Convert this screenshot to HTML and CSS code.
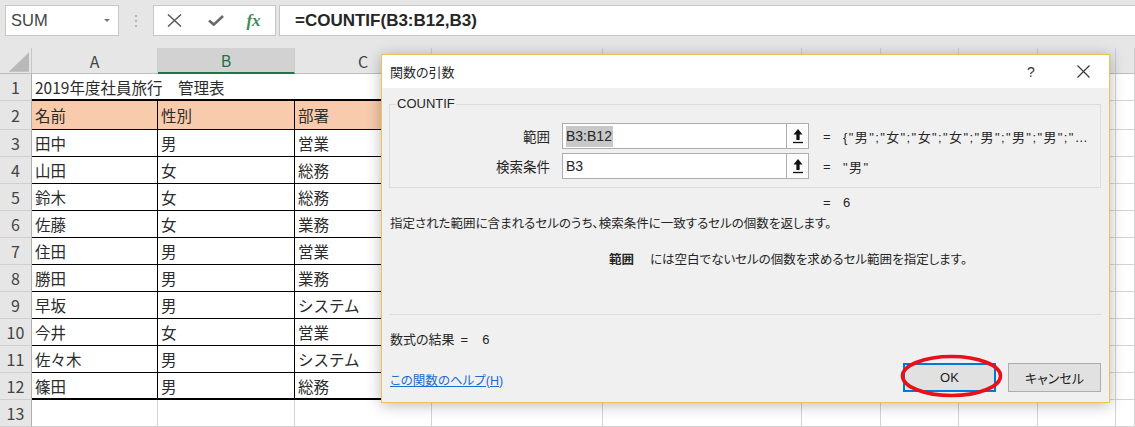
FILE: index.html
```html
<!DOCTYPE html>
<html lang="ja">
  <head>
    <meta charset="UTF-8" />
    <title>関数の引数</title>
    <link rel="stylesheet" href="styles.css">
  </head>
  <body>
    <div class="toolbar">
      <div class="name-box"><span>SUM</span><span class="caret"></span></div>
      <div class="grip"><span></span><span></span><span></span></div>
      <div class="fx-box">
        <span class="fx-icon">
          <svg width="15" height="13" viewBox="0 0 15 13"><path d="M1 0.5L14 12.5M14 0.5L1 12.5" stroke="#5a5a5a" stroke-width="1.5" fill="none"/></svg>
        </span>
        <span class="fx-icon">
          <svg width="16" height="11" viewBox="0 0 16 11"><path d="M1 5.5L5.8 9.6L15 1" stroke="#6a6a6a" stroke-width="2.6" fill="none"/></svg>
        </span>
        <span class="fx-icon fx">fx</span>
      </div>
      <div class="formula">=COUNTIF(B3:B12,B3)</div>
    </div>

    <div class="sheet">
      <div class="corner"><svg width="32" height="26" viewBox="0 0 32 26"><polygon points="30,4 30,24 9,24" fill="#b9b9b9"/></svg></div>
      <div class="ch">A</div><div class="ch sel">B</div><div class="ch">C</div><div class="ch">D</div><div class="ch">E</div><div class="ch">F</div><div class="ch">G</div><div class="ch">H</div><div class="ch">I</div><div class="ch"></div>

      <div class="rh">1</div><div class="title">2019年度社員旅行　管理表</div><div></div><div></div><div></div><div></div><div></div><div></div><div></div>
      <div class="rh">2</div><div class="t hd">名前</div><div class="t hd">性別</div><div class="t hd">部署</div><div></div><div></div><div></div><div></div><div></div><div></div><div></div>
      <div class="rh">3</div><div class="t">田中</div><div class="t">男</div><div class="t">営業</div><div></div><div></div><div></div><div></div><div></div><div></div><div></div>
      <div class="rh">4</div><div class="t">山田</div><div class="t">女</div><div class="t">総務</div><div></div><div></div><div></div><div></div><div></div><div></div><div></div>
      <div class="rh">5</div><div class="t">鈴木</div><div class="t">女</div><div class="t">総務</div><div></div><div></div><div></div><div></div><div></div><div></div><div></div>
      <div class="rh">6</div><div class="t">佐藤</div><div class="t">女</div><div class="t">業務</div><div></div><div></div><div></div><div></div><div></div><div></div><div></div>
      <div class="rh">7</div><div class="t">住田</div><div class="t">男</div><div class="t">営業</div><div></div><div></div><div></div><div></div><div></div><div></div><div></div>
      <div class="rh">8</div><div class="t">勝田</div><div class="t">男</div><div class="t">業務</div><div></div><div></div><div></div><div></div><div></div><div></div><div></div>
      <div class="rh">9</div><div class="t">早坂</div><div class="t">男</div><div class="t">システム</div><div></div><div></div><div></div><div></div><div></div><div></div><div></div>
      <div class="rh">10</div><div class="t">今井</div><div class="t">女</div><div class="t">営業</div><div></div><div></div><div></div><div></div><div></div><div></div><div></div>
      <div class="rh">11</div><div class="t">佐々木</div><div class="t">男</div><div class="t">システム</div><div></div><div></div><div></div><div></div><div></div><div></div><div></div>
      <div class="rh">12</div><div class="t end">篠田</div><div class="t end">男</div><div class="t end">総務</div><div></div><div></div><div></div><div></div><div></div><div></div><div></div>
      <div class="rh">13</div><div></div><div></div><div></div><div></div><div></div><div></div><div></div><div></div><div></div><div></div>
    </div>

    <!-- Function Arguments dialog floating over the sheet -->
    <div class="dialog">
      <div class="dlg-title">
        <span class="dlg-name">関数の引数</span>
        <span class="dlg-help">?</span>
        <span class="dlg-close">
          <svg width="13" height="13" viewBox="0 0 13 13"><path d="M0.5 0.5L12.5 12.5M12.5 0.5L0.5 12.5" stroke="#333" stroke-width="1.1" fill="none"/></svg>
        </span>
      </div>

      <div class="dlg-body">
        <div class="group">
          <span class="legend">COUNTIF</span>
          <div class="arg">
            <span class="arg-name">範囲</span>
            <span class="arg-input"><span class="picked">B3:B12</span></span>
            <span class="ref-btn">
              <svg width="12" height="16" viewBox="0 0 12 16"><path d="M6 1L10.5 6.5H7.6V12H4.4V6.5H1.5Z" fill="#111"/><path d="M1 14.5H11" stroke="#111" stroke-width="1.3"/></svg>
            </span>
            <span class="eq">=</span>
            <span class="arg-val">{"男";"女";"女";"女";"男";"男";"男";"…</span>
          </div>
          <div class="arg">
            <span class="arg-name">検索条件</span>
            <span class="arg-input">B3</span>
            <span class="ref-btn">
              <svg width="12" height="16" viewBox="0 0 12 16"><path d="M6 1L10.5 6.5H7.6V12H4.4V6.5H1.5Z" fill="#111"/><path d="M1 14.5H11" stroke="#111" stroke-width="1.3"/></svg>
            </span>
            <span class="eq">=</span>
            <span class="arg-val">"男"</span>
          </div>
        </div>

        <div class="result"><span class="eq">=</span><span class="res-val">6</span></div>
        <p class="desc">指定された範囲に含まれるセルのうち、検索条件に一致するセルの個数を返します。</p>
        <p class="desc arg-help"><b>範囲</b>には空白でないセルの個数を求めるセル範囲を指定します。</p>

        <div class="sep"></div>

        <div class="outcome">数式の結果<span class="out-eq">=</span><span class="out-val">6</span></div>

        <div class="dlg-foot">
          <a class="help-link" href="#">この関数のヘルプ(H)</a>
          <button class="btn btn-ok">OK</button>
          <button class="btn">キャンセル</button>
        </div>
      </div>
    </div>

    <svg class="mark" width="108" height="50" viewBox="0 0 108 50"><ellipse cx="53.5" cy="24" rx="49" ry="19.5" fill="none" stroke="#e8101a" stroke-width="3.6"/></svg>
  </body>
</html>
```

FILE: styles.css
```css
body {
  margin: 0;
  width: 1135px;
  height: 427px;
  overflow: hidden;
  position: relative;
  background: #fff;
  font-family: "Noto Sans CJK JP", sans-serif;
}

/* formula bar */
.toolbar {
  height: 48px;
  box-sizing: border-box;
  padding: 5px 0 0 5px;
  background: #e6e6e6;
  display: flex;
  align-items: flex-start;
}

.name-box {
  width: 114px;
  height: 31px;
  box-sizing: border-box;
  background: #fff;
  border: 1px solid #c6c6c6;
  display: flex;
  align-items: center;
  justify-content: space-between;
  padding: 0 8px 0 5px;
  font: 16.5px "Liberation Sans", sans-serif;
  color: #444;
}

.caret {
  border-left: 3px solid transparent;
  border-right: 3px solid transparent;
  border-top: 3px solid #777;
}

.grip {
  width: 34px;
  display: flex;
  flex-direction: column;
  align-items: center;
  gap: 3px;
  padding-top: 10px;
}

.grip span {
  width: 2px;
  height: 2px;
  background: #b4b4b4;
}

.fx-box {
  width: 123px;
  height: 31px;
  box-sizing: border-box;
  background: #fff;
  border: 1px solid #c6c6c6;
  display: grid;
  grid-template-columns: 41px 41px 39px;
  align-items: center;
}

.fx-icon {
  display: flex;
  justify-content: center;
  align-items: center;
}

.fx {
  font: italic bold 17px "Liberation Serif", serif;
  color: #3c8c58;
  padding-right: 4px;
}

.formula {
  flex: 1;
  height: 31px;
  box-sizing: border-box;
  margin-left: 3px;
  padding-left: 15px;
  background: #fff;
  border: 1px solid #c6c6c6;
  border-right: none;
  font: bold 17px "Liberation Sans", sans-serif;
  line-height: 29px;
  color: #262626;
}

/* worksheet grid */
.sheet {
  display: grid;
  grid-template-columns: 32px 126px 137px 137px 171px 199px 79px 78px 79px 78px 1fr;
  grid-template-rows: 26px 27px 29px repeat(11, 27px);
  font-size: 15.5px;
  color: #2b2b2b;
}

.sheet > div {
  box-sizing: border-box;
  border-right: 1px solid #d4d4d4;
  border-bottom: 1px solid #d4d4d4;
  padding-left: 3px;
  white-space: nowrap;
  display: flex;
  align-items: center;
}

.sheet > .corner {
  padding: 0;
  background: #e6e6e6;
  border-right: 1px solid #c6c6c6;
  border-bottom: 1px solid #bdbdbd;
}

.sheet > .ch {
  padding: 0;
  justify-content: center;
  background: #e6e6e6;
  color: #444;
  border-right: 1px solid #cdcdcd;
  border-bottom: 1px solid #bdbdbd;
  font-size: 16px;
}

.sheet > .ch.sel {
  background: #d2d2d2;
  color: #217346;
  border-bottom: 2px solid #217346;
}

.sheet > .rh {
  padding: 0;
  justify-content: center;
  background: #e6e6e6;
  color: #444;
  border-right: 1px solid #b0b0b0;
  border-bottom: 1px solid #cfcfcf;
  font-size: 16px;
}

.sheet > .title {
  grid-column: span 3;
  border-bottom: 2px solid #000;
}

.sheet > .t {
  border-right-color: #000;
  border-bottom-color: #000;
}

.sheet > .hd {
  background: #f8cbad;
}

.sheet > .end {
  border-bottom: 2px solid #000;
}

/* dialog */
.dialog {
  position: absolute;
  left: 381px;
  top: 54px;
  width: 729px;
  box-sizing: border-box;
  border: 1px solid #eec255;
  background: #f0f0f0;
  box-shadow: 0 2px 14px rgba(0, 0, 0, 0.28);
  font-family: "Liberation Sans", "Noto Sans CJK JP", sans-serif;
  font-size: 12.5px;
  font-feature-settings: "palt";
  color: #262626;
}

.dlg-title {
  height: 33px;
  background: #fff;
  display: flex;
  align-items: center;
  padding-left: 8px;
  font-size: 13px;
}

.dlg-name {
  flex: 1;
}

.dlg-help {
  width: 40px;
  text-align: center;
  font-size: 14px;
  color: #333;
  margin-right: 6px;
}

.dlg-close {
  width: 52px;
  display: flex;
  justify-content: center;
}

.dlg-body {
  padding: 0 8px 10px 7px;
}

.group {
  position: relative;
  margin-top: 16px;
  height: 84px;
  box-sizing: border-box;
  border: 1px solid #dcdcdc;
  padding-top: 18px;
}

.legend {
  position: absolute;
  top: -10px;
  left: 6px;
  padding: 0 1px;
  background: #f0f0f0;
  font-size: 13px;
  line-height: 18px;
}

.arg {
  display: flex;
  align-items: center;
  height: 26px;
}

.arg + .arg {
  margin-top: 4px;
}

.arg-name {
  width: 160px;
  text-align: right;
  font-size: 13.5px;
  font-feature-settings: normal;
}

.arg-input {
  margin-left: 12px;
  width: 224px;
  height: 26px;
  box-sizing: border-box;
  background: #fff;
  border: 1px solid #adadad;
  border-right: none;
  padding-left: 3px;
  font-size: 14px;
  line-height: 24px;
}

.picked {
  background: #c8c8c8;
  padding: 2px 1px 3px 0;
}

.ref-btn {
  width: 23px;
  height: 26px;
  box-sizing: border-box;
  border: 1px solid #adadad;
  background: #fbfbfb;
  box-shadow: inset 0 0 0 1px #fff;
  display: flex;
  justify-content: center;
  align-items: center;
}

.eq {
  margin-left: 14px;
  width: 20px;
  font-size: 13px;
}

.arg-val {
  font-size: 13px;
  letter-spacing: 1.4px;
}

.result {
  margin-top: 5px;
  padding-left: 434px;
  line-height: 20px;
  font-size: 13px;
}

.result .eq {
  margin-left: 0;
  display: inline-block;
}

.desc {
  margin: 0;
  padding-left: 1px;
  margin-top: 1px;
  line-height: 20px;
}

.arg-help {
  margin-top: 16px;
  padding-left: 220px;
}

.arg-help b {
  margin-right: 16px;
}

.sep {
  margin-top: 44px;
  height: 1px;
  background: #dcdcdc;
}

.outcome {
  margin-top: 15px;
  padding-left: 1px;
  line-height: 20px;
  font-size: 13px;
}

.out-eq {
  margin-left: 6px;
}

.out-val {
  margin-left: 14px;
}

.dlg-foot {
  margin-top: 13px;
  display: flex;
  align-items: center;
}

.help-link {
  flex: 1;
  color: #1a6cd1;
  text-decoration: underline;
  padding-left: 1px;
  padding-top: 3px;
}

.btn {
  width: 93px;
  height: 29px;
  margin-left: 12px;
  background: #e1e1e1;
  border: 1px solid #adadad;
  font: 13px "Liberation Sans", "Noto Sans CJK JP", sans-serif;
  font-feature-settings: "palt";
  color: #222;
}

.btn-ok {
  border-color: #0078d7;
  box-shadow: inset 0 0 0 1px #0078d7;
}

.mark {
  position: absolute;
  left: 898px;
  top: 352px;
}
```
